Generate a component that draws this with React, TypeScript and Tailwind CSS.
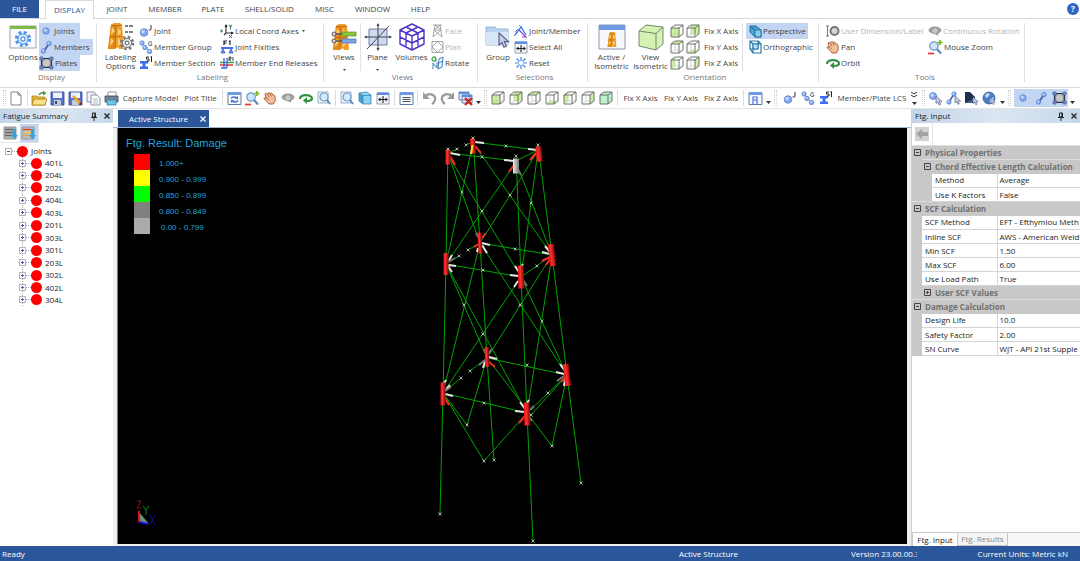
import type { ReactNode } from 'react'
import { clsx } from 'clsx'

/* ---------- icons ---------- */

function Svg({ w = 16, h = 16, vb, children }: { w?: number; h?: number; vb?: string; children: ReactNode }) {
  return (
    <svg width={w} height={h} viewBox={vb ?? `0 0 ${w} ${h}`} fill="none" className="block shrink-0" aria-hidden="true">
      {children}
    </svg>
  )
}

function Ball({ x, y, r }: { x: number; y: number; r: number }) {
  return (
    <>
      <circle cx={x} cy={y} r={r} fill="#86a9ec" stroke="#5b83d6" strokeWidth="0.8" />
      <circle cx={x - r * 0.25} cy={y - r * 0.25} r={r * 0.45} fill="#c6d8fa" />
    </>
  )
}

function Gear({ x, y, r, color }: { x: number; y: number; r: number; color: string }) {
  return (
    <>
      <circle cx={x} cy={y} r={r} stroke={color} strokeWidth={r * 0.5} strokeDasharray={`${r * 0.42} ${r * 0.365}`} />
      <circle cx={x} cy={y} r={r * 0.78} fill="#e4eefb" stroke={color} strokeWidth="1" />
      <circle cx={x} cy={y} r={r * 0.32} fill="#fff" stroke={color} strokeWidth="1.2" />
    </>
  )
}

function Tower() {
  return (
    <>
      <path d="M4 2 7 0h6l2 2 2 24h-5l-1-2-3 2H1z" fill="#ee9f2b" />
      <path d="M4 2 9 3 8 26H1z" fill="#e48a17" />
      <path d="M5 4l3 4-4 4zM11 5l3 4-3 4zM4 15l3 3-4 5zM11 15l4 4-4 4z" fill="#ffd07a" />
      <path d="M4 2 9 3l6-1M9 3 8 25M3 13l6 1 6-1" stroke="#b9670b" strokeWidth="0.9" />
    </>
  )
}

const Cursor = ({ x, y, s = 1 }: { x: number; y: number; s?: number }) => (
  <path
    transform={`translate(${x} ${y}) scale(${s})`}
    d="M0 0v10l2.4-2 1.8 4 2-.9-1.8-3.9H8z"
    fill="#c9cdea"
    stroke="#55597f"
    strokeWidth="0.9"
  />
)

const OptionsIcon = () => (
  <Svg w={28} h={24}>
    <rect x="1" y="1" width="26" height="22" fill="#f8fafd" stroke="#9aa4ae" />
    <path d="M1 1h26v3H1z" fill="#7dbb42" />
    <Gear x={14} y={14} r={6.5} color="#4b93e6" />
  </Svg>
)

const JointIcon = () => (
  <Svg w={14} h={14}>
    <Ball x={7} y={7} r={3.2} />
  </Svg>
)

const MemberIcon = () => (
  <Svg w={14} h={14}>
    <path d="M5 11 10 3.500" stroke="#44639e" strokeWidth="1.8" />
    <Ball x={4.5} y={11} r={2.2} />
    <Ball x={10} y={3.5} r={2.2} />
  </Svg>
)

const PlateIcon = () => (
  <Svg w={15} h={14}>
    <path d="M2.500 2.500h10v9h-10z" fill="#8f949e" stroke="#2b3346" strokeWidth="1.2" />
    <circle cx="7.5" cy="7" r="3.4" fill="#c8c8c8" />
    {[[2.5, 2.5], [12.5, 2.5], [2.5, 11.5], [12.5, 11.5]].map(([x, y]) => (
      <circle key={`${x}-${y}`} cx={x} cy={y} r="1.8" fill="#6f8ecb" stroke="#34497c" strokeWidth="0.6" />
    ))}
  </Svg>
)

const LabelingIcon = () => (
  <Svg w={28} h={28}>
    <Tower />
    <path d="M18 3h3m1 0h4M18 9h3m1 0h4" stroke="#555" strokeWidth="1.6" />
    <Gear x={20} y={20} r={5.8} color="#777" />
  </Svg>
)

const JointJIcon = () => (
  <Svg w={14} h={14}>
    <Ball x={5} y={8.5} r={3.8} />
    <path d="M12 1v4c0 1.600-2 1.600-2.400.5" stroke="#333" strokeWidth="1" />
  </Svg>
)

const GroupGIcon = () => (
  <Svg w={14} h={14}>
    <path d="M3 3l7 8" stroke="#8d9ab0" />
    <Ball x={3} y={3} r={2.2} />
    <Ball x={6} y={7.5} r={2.2} />
    <Ball x={10.5} y={11.5} r={2.2} />
    <path d="M13 2.500c-1-1.500-3.500-1-3.500 1.200s2.500 2.500 3.500 1V4h-1.300" stroke="#556" strokeWidth="0.9" />
  </Svg>
)

const SectionIcon = () => (
  <Svg w={14} h={14}>
    <path d="M1 5h8v2.500H6.500v3H9V13H1v-2.500h2.500v-3H1z" fill="#3e6df0" />
    <path d="M10 1H7.500v2H10v2H7.500M11.500 1l1-.5V6" stroke="#222" strokeWidth="1" />
  </Svg>
)

const CoordIcon = () => (
  <Svg w={14} h={14}>
    <path d="M6 1v8h7M6 9l-2 2" stroke="#333" strokeWidth="1.1" />
    <path d="M6 0 4.500 3h3zM14 9l-3-1.500v3z" fill="#222" />
    <path d="M0 7h3M1.500 5.500v3M9 1l1.500 2L12 1m-1.500 2v2.500" stroke="#3b7f63" strokeWidth="1.1" />
    <path d="M9 11l3 3m0-3-3 3" stroke="#3c58a0" strokeWidth="1" />
  </Svg>
)

const FixityIcon = () => (
  <Svg w={14} h={14}>
    <path d="M4 5V1h3M4 3h2.500M9 1.500 10 1v4" stroke="#1d1d3c" strokeWidth="1.2" />
    <path d="M1 7h12v2H1z" fill="#3e6df0" />
    <path d="M3 9l-2 4h4zM11 9l-2 4h4z" fill="#6a92f5" stroke="#3157c4" strokeWidth="0.8" />
  </Svg>
)

const ReleaseIcon = () => (
  <Svg w={14} h={14}>
    <path d="M0 6.500h14" stroke="#2fa043" strokeWidth="1.4" />
    <path d="M0 9h13" stroke="#e03434" strokeWidth="1.5" />
    <path d="M4 2v9M7 2v10M1 12h6" stroke="#3963d6" strokeWidth="1.3" />
    <path d="M9 5V1h2v2H9l2 2M13 1v4" stroke="#333" strokeWidth="0.9" />
  </Svg>
)

const ViewsIcon = () => (
  <Svg w={26} h={27}>
    <g transform="translate(1 0)">
      <Tower />
    </g>
    <path d="M11 8h14v4H11z" fill="#8dc63f" stroke="#5d8a22" strokeWidth="0.7" />
    <path d="M11 15h14v4H11z" fill="#7ba7e6" stroke="#4470b4" strokeWidth="0.7" />
    <path d="M3 10h8M3 17h8" stroke="#555" strokeWidth="1.4" />
    <circle cx="3" cy="10" r="2" fill="#ddd" stroke="#555" />
    <circle cx="3" cy="17" r="2" fill="#ddd" stroke="#555" />
  </Svg>
)

const PlaneIcon = () => (
  <Svg w={28} h={28}>
    <path d="M5 6h18v16H5z" fill="#ced9f3" stroke="#6a7387" strokeWidth="0.9" />
    <path d="M14 1v26M1 14h26M3 26 25 3" stroke="#3e4452" strokeWidth="1" />
    <path d="M14 0l-1.500 3h3zM28 14l-3-1.500v3zM0 14l3-1.500v3zM14 28l-1.500-3h3z" fill="#3e4452" />
  </Svg>
)

const VolumesIcon = () => (
  <Svg w={28} h={28}>
    <path
      d="M14 1l12 6v14l-12 6-12-6V7zM2 7l12 6 12-6M14 13v14M8 4l12 6v14M20 4 8 10v14M2 14l12 6 12-6"
      stroke="#4f35c9"
      strokeWidth="1.4"
      strokeLinejoin="round"
    />
  </Svg>
)

const FaceIcon = () => (
  <Svg w={13} h={14}>
    <path d="M2 1h9M4 1 2 13M9 1l2 12M3 6h7M4 1l6 5-8 7M9 1 3 6l8 7" stroke="#9a9a9a" strokeWidth="0.9" />
  </Svg>
)

const PlanIcon = () => (
  <Svg w={13} h={14}>
    <path d="M1 1.500h11v11H1zM6.500 1.500 12 7l-5.500 5.500L1 7z" stroke="#9a9a9a" strokeWidth="0.9" />
  </Svg>
)

const RotateIcon = () => (
  <Svg w={13} h={14}>
    <path d="M5 2C3 0 1 1 1 3s2 3 4 1.500V3H3.500" stroke="#2a9a3c" strokeWidth="1.2" />
    <path d="M2 13V7l4 5V6M7 13l1-10 4-2-1 10zM8 7l4-2" stroke="#3a78b5" strokeWidth="1" />
  </Svg>
)

const FolderIcon = () => (
  <Svg w={26} h={26}>
    <path d="M1 3h9l2 2h11v16H1z" fill="#b9d3ef" stroke="#8eaed2" strokeWidth="0.9" />
    <path d="M1 8h22v13H1z" fill="#d6e6f7" />
    <Cursor x={14} y={9} s={1.2} />
  </Svg>
)

const JointMemberIcon = () => (
  <Svg w={14} h={14}>
    <path d="M1 11 7 3l5 8" stroke="#3a86e0" strokeWidth="1.4" />
    <path d="M5 6l7 7H8" stroke="#8d42c9" strokeWidth="1.2" />
    <path d="M5 1l4 4M0 12l4-4M1 8l3-3" stroke="#4a7ee0" strokeWidth="1" />
  </Svg>
)

const SelectAllIcon = () => (
  <Svg w={14} h={14}>
    <path d="M1 2h12v11H1z" fill="#f5f7fb" stroke="#8894a8" strokeWidth="0.9" />
    <path d="M1 1.500h12V4H1z" fill="#5f8ddd" />
    <path d="M7 5v7M3 8.500h8" stroke="#222" strokeWidth="1.1" />
    <path d="M2 8.500l2.500-2v4zM12 8.500l-2.500-2v4z" fill="#222" />
  </Svg>
)

const ResetIcon = () => (
  <Svg w={14} h={14}>
    <path
      d="M7 1v4M7 9v4M1 7h4M9 7h4M2.500 2.500l3 3M8.500 8.500l3 3M11.500 2.500l-3 3M5.500 8.500l-3 3"
      stroke="#3d86e4"
      strokeWidth="1.2"
    />
  </Svg>
)

const ActiveIsoIcon = () => (
  <Svg w={28} h={26}>
    <path d="M1 1h26v24H1z" fill="#f6f8fb" stroke="#8d99ac" />
    <path d="M1 1h26v5H1z" fill="#6f9be4" />
    <g transform="translate(9 8) scale(0.55 0.58)">
      <Tower />
    </g>
  </Svg>
)

const BigCubeIcon = () => (
  <Svg w={26} h={27}>
    <path d="M1 7 8 1l17 2v17l-7 6-17-4z" fill="#d3f2b4" stroke="#74876c" strokeLinejoin="round" />
    <path d="M1 7l17 2.500L25 3M18 9.500V26" stroke="#74876c" />
  </Svg>
)

type Face = 'front' | 'back' | 'top' | 'bottom' | 'left' | 'right' | 'all'

const facePaths: Record<Face, string> = {
  front: 'M1 4h8v9H1z',
  back: 'M5 1h8v9H5z',
  top: 'M1 4l4-3h8L9 4z',
  bottom: 'M1 13l4-3h8l-4 3z',
  left: 'M1 4l4-3v9l-4 3z',
  right: 'M9 4l4-3v9l-4 3z',
  all: 'M1 4l4-3h8v9l-4 3H1z',
}

function CubeIcon({ face }: { face: Face }) {
  return (
    <Svg w={14} h={14}>
      <path d={facePaths[face]} fill={face === 'all' ? '#bff3cd' : '#ccf29c'} />
      <path d="M1 4h8v9H1zM1 4l4-3h8L9 4M13 1v9l-4 3" stroke="#5d625d" strokeWidth="0.9" strokeLinejoin="round" />
      {face !== 'all' && <path d="M5 1v9h8M5 10l-4 3" stroke="#b3b8b3" strokeWidth="0.6" />}
    </Svg>
  )
}

const PerspectiveIcon = () => (
  <Svg w={13} h={14}>
    <path d="M1 2h6l5 4v7H6L1 8z" fill="#4aa3d2" stroke="#1c6c9c" strokeWidth="0.9" />
    <path d="M6 6h6v7H6z" fill="#8ccbe9" stroke="#1c6c9c" strokeWidth="0.9" />
    <path d="M1 2l5 4" stroke="#1c6c9c" />
  </Svg>
)

const OrthographicIcon = () => (
  <Svg w={13} h={14}>
    <path d="M1 1h8v8H1zM4 4h8v9H4zM1 1l3 3M9 1l3 3M1 9l3 4" stroke="#2678a8" strokeWidth="1.2" />
    <path d="M4 4h5v5H4z" fill="#bfe2f2" stroke="#2678a8" />
  </Svg>
)

const DimensionIcon = () => (
  <Svg w={14} h={14}>
    <path d="M0 2h3M0 12h3M1.500 2v10" stroke="#777" />
    <circle cx="8.5" cy="7" r="4" fill="#d5d5d5" stroke="#777" strokeWidth="2" />
  </Svg>
)

const HandIcon = () => (
  <Svg w={14} h={14}>
    <path
      d="M2 3c1-1.500 2-.5 2.600.5C5 1 6.600 1 7.200 2.800 8 1.500 9.500 2 9.700 4c1.500-.5 2.300.8 2.500 2.300.5 3-.2 5-2 6.700H6C5 11 2.500 9.500 1.200 8 .6 6.800 2 6.400 3.200 7.300z"
      fill="#f0bf9c"
      stroke="#a0522d"
      strokeWidth="0.9"
    />
    <path d="M4.600 3.500 6 6M7.200 2.800 8.200 5.500M3.500 7.500l2 1" stroke="#a0522d" strokeWidth="0.8" />
  </Svg>
)

const OrbitIcon = () => (
  <Svg w={14} h={14}>
    <path d="M1 8c0-5 12-5 12-.5 0 2-2 2.500-5 2.500" stroke="#2f9440" strokeWidth="2.2" />
    <path d="M8 6v7l-4-3.500z" fill="#2f9440" />
  </Svg>
)

const ContinuousIcon = () => (
  <Svg w={14} h={14}>
    <path d="M1 6c1-4 11-4 12 0 0 2-2 3-4 3l1 2-4-2C3 9 1 8 1 6z" fill="#a5a5a5" stroke="#818181" strokeWidth="0.8" />
    <path d="M4 5l3-1.500L10 5v3.500L7 10 4 8.500z" fill="#c9c9c9" stroke="#8a8a8a" strokeWidth="0.7" />
  </Svg>
)

const ZoomIcon = () => (
  <Svg w={15} h={15}>
    <circle cx="6" cy="6" r="4.2" fill="#cfe5f7" stroke="#6c9cc7" strokeWidth="1.3" />
    <path d="M9 9l4 4.500" stroke="#5a87b3" strokeWidth="2" />
    <path d="M12 0v5M9.500 2.500h5" stroke="#7cb518" strokeWidth="1.7" />
    <path d="M0 13.500h6" stroke="#dd3a35" strokeWidth="1.7" />
  </Svg>
)

const MagnifierIcon = () => (
  <Svg w={14} h={14}>
    <path d="M1 1h10v11H1z" fill="#eef3fa" stroke="#8ea8cc" strokeWidth="0.9" />
    <circle cx="7" cy="6" r="4" fill="#d5e9f8" stroke="#6c9cc7" strokeWidth="1.2" />
    <path d="M10 9l3 4" stroke="#5a87b3" strokeWidth="1.8" />
  </Svg>
)

const NewIcon = () => (
  <Svg w={14} h={15}>
    <path d="M2 1h7l3 3v10H2z" fill="#fff" stroke="#777" strokeWidth="0.9" />
    <path d="M9 1v3h3" stroke="#777" strokeWidth="0.9" />
  </Svg>
)

const OpenIcon = () => (
  <Svg w={16} h={15}>
    <path d="M1 5h5l1 1h7v8H1z" fill="#e8b93d" stroke="#ab7d16" strokeWidth="0.8" />
    <path d="M3 8h13l-2 6H1z" fill="#fbe08c" stroke="#ab7d16" strokeWidth="0.8" />
    <path d="M8 4c1-2 3-2.500 5-2" stroke="#3d9a2b" strokeWidth="1.6" />
    <path d="M12 0l3.500 2L12 4.500z" fill="#3d9a2b" />
  </Svg>
)

const SaveIcon = () => (
  <Svg w={15} h={15}>
    <path d="M1 1h13v13H1z" fill="#5470cc" stroke="#3a4f9e" strokeWidth="0.9" />
    <path d="M3 1.500h9V7H3z" fill="#eef2fb" />
    <path d="M4 9h7v5H4z" fill="#c6cbd8" />
    <path d="M5 10h2v3H5z" fill="#39457f" />
  </Svg>
)

const SaveAsIcon = () => (
  <Svg w={15} h={15}>
    <path d="M1 1h13v13H1z" fill="#5470cc" stroke="#3a4f9e" strokeWidth="0.9" />
    <path d="M3 1.500h9V7H3z" fill="#eef2fb" />
    <path d="M4 9h7v5H4z" fill="#c6cbd8" />
    <path d="M5 5l7 7" stroke="#e9a823" strokeWidth="2.6" />
    <path d="M10.500 13.500 14 14l-.5-3.500z" fill="#7c2d1c" />
  </Svg>
)

const CopyIcon = () => (
  <Svg w={15} h={15}>
    <path d="M1 1h7l2 2v8H1z" fill="#f2f4f9" stroke="#7d879c" strokeWidth="0.9" />
    <path d="M5 4h6l3 3v7H5z" fill="#fff" stroke="#7d879c" strokeWidth="0.9" />
    <path d="M7 8h5M7 10h5M7 12h5" stroke="#9aa6bf" strokeWidth="0.8" />
  </Svg>
)

const PrintIcon = () => (
  <Svg w={15} h={15}>
    <path d="M4 1h8v5H4z" fill="#fff" stroke="#7b8ba0" strokeWidth="0.9" />
    <path d="M1 5h13v6H1z" fill="#6f8299" stroke="#46566a" strokeWidth="0.9" />
    <path d="M3 9h9v5H3z" fill="#6fc6ea" stroke="#3b7fa6" strokeWidth="0.8" />
  </Svg>
)

function WindowIcon({ children }: { children?: ReactNode }) {
  return (
    <Svg w={15} h={15}>
      <path d="M1 1.500h13v12H1z" fill="#f5f8fc" stroke="#5e7aa8" />
      <path d="M1 1h13v3H1z" fill="#6f9be4" />
      {children}
    </Svg>
  )
}

const BlueCubeIcon = () => (
  <Svg w={14} h={14}>
    <path d="M1 2l8-1 4 3v9H5l-4-3z" fill="#8ad3f2" />
    <path d="M1 2l4 3v8l-4-3z" fill="#3f9fd0" />
    <path d="M1 2l8-1 4 3v9H5l-4-3zM1 2l4 2.500h8M5 4.500V13" stroke="#3787b5" strokeWidth="0.8" />
  </Svg>
)

const UndoIcon = () => (
  <Svg w={15} h={15}>
    <path d="M3 5c5-4 11-1 10 4-.4 2-1.500 3-3 4" stroke="#9b9b9b" strokeWidth="2.2" />
    <path d="M1 1v7h7z" fill="#9b9b9b" />
  </Svg>
)

const RedoIcon = () => (
  <Svg w={15} h={15}>
    <path d="M12 5C7 1 1 4 2 9c.4 2 1.500 3 3 4" stroke="#9b9b9b" strokeWidth="2.2" />
    <path d="M14 1v7H7z" fill="#9b9b9b" />
  </Svg>
)

const DeleteWindowsIcon = () => (
  <Svg w={15} h={15}>
    <path d="M1 1h10v8H1zM4 4h10v8H4z" fill="#e8eefa" stroke="#6175a8" strokeWidth="0.9" />
    <path d="M1 1h10v2H1zM4 4h10v2H4z" fill="#5a8fe0" />
    <path d="M7 7l7 7m0-7-7 7" stroke="#c8261f" strokeWidth="2.4" />
  </Svg>
)

const PickJointIcon = () => (
  <Svg w={15} h={15}>
    <Ball x={5} y={5} r={3.5} />
    <Cursor x={8} y={5} s={0.75} />
  </Svg>
)

const PickMemberIcon = () => (
  <Svg w={15} h={15}>
    <path d="M3 11 8 3" stroke="#44639e" strokeWidth="1.5" />
    <Ball x={3} y={11} r={2.2} />
    <Ball x={8} y={3} r={2.2} />
    <Cursor x={9} y={5} s={0.7} />
  </Svg>
)

const PickPlateIcon = () => (
  <Svg w={15} h={15}>
    <path d="M1 1h5l5 5v6H1z" fill="#1f2f4d" />
    <path d="M1 12 11 7v5z" fill="#3b6694" />
    <Cursor x={9} y={6} s={0.65} />
  </Svg>
)

const GlobeIcon = () => (
  <Svg w={15} h={15}>
    <circle cx="7" cy="7" r="6" fill="#4d7ec6" stroke="#33589a" strokeWidth="0.8" />
    <path d="M3 4c2-2 4-2 5-1L6 6 4 7zM8 8l4-2-1 4-3 2z" fill="#c6dbf3" />
    <Cursor x={9} y={7} s={0.55} />
  </Svg>
)

const SortIcon = ({ tinted }: { tinted?: boolean }) => (
  <Svg w={16} h={16}>
    <path d="M1 2h12v12H1z" fill={tinted ? '#bdbdbd' : '#b0b0b0'} stroke="#969696" />
    <path d="M2 4.500h8" stroke={tinted ? '#e03a2f' : '#666'} strokeWidth="1.3" />
    <path d="M2 7.500h8" stroke={tinted ? '#ecd23c' : '#666'} strokeWidth="1.3" />
    <path d="M2 10.500h8" stroke={tinted ? '#e9a24c' : '#666'} strokeWidth="1.3" />
    <path d="M10 4h3v6h2l-3.500 4L8 10h2z" fill="#2aa5dd" />
  </Svg>
)

const PinIcon = () => (
  <Svg w={8} h={9}>
    <path d="M2.500 1h3v4h-3zM1 5.500h6M4 5.500V9" stroke="#222" strokeWidth="1" />
    <path d="M5 1v4" stroke="#222" strokeWidth="1.2" />
  </Svg>
)

const CloseIcon = ({ color = '#222' }: { color?: string }) => (
  <Svg w={8} h={8}>
    <path d="M1.500 1.500l5 5m0-5-5 5" stroke={color} strokeWidth="1.3" />
  </Svg>
)

const Caret = () => (
  <Svg w={5} h={3}>
    <path d="M0 0h5L2.500 3z" fill="#333" />
  </Svg>
)

const TinyCaret = () => (
  <Svg w={3} h={2}>
    <path d="M0 0h3L1.500 2z" fill="#444" />
  </Svg>
)

/* ---------- ribbon ---------- */

const tabs = [
  { label: 'JOINT', width: 'w-[44px]' },
  { label: 'MEMBER', width: 'w-[52px]' },
  { label: 'PLATE', width: 'w-[44px]' },
  { label: 'SHELL/SOLID', width: 'w-[69px]' },
  { label: 'MISC', width: 'w-[41px]' },
  { label: 'WINDOW', width: 'w-[55px]' },
  { label: 'HELP', width: 'w-[41px]' },
]

function SmallButton({
  icon,
  label,
  active,
  disabled,
  caret,
  className,
}: {
  icon: ReactNode
  label: string
  active?: boolean
  disabled?: boolean
  caret?: boolean
  className?: string
}) {
  return (
    <button
      type="button"
      disabled={disabled}
      className={clsx(
        'flex h-4 items-center gap-px whitespace-nowrap',
        active && 'bg-[#c2d5f2]',
        disabled ? 'text-[#b4b4b4]' : 'text-[#444]',
        className,
      )}
    >
      {icon}
      {label}
      {caret && (
        <span className="pl-[2px]">
          <TinyCaret />
        </span>
      )}
    </button>
  )
}

function LargeButton({
  icon,
  lines,
  caret,
  className,
}: {
  icon: ReactNode
  lines: string[]
  caret?: boolean
  className: string
}) {
  return (
    <button type="button" className={clsx('flex shrink-0 flex-col items-center leading-[9px] text-[#444]', className)}>
      <span className="mb-px flex h-7 items-center">{icon}</span>
      {lines.map((line) => (
        <span key={line} className="whitespace-nowrap">
          {line}
        </span>
      ))}
      {caret && (
        <span className="mt-2">
          <TinyCaret />
        </span>
      )}
    </button>
  )
}

function Group({ title, className, children }: { title: string; className: string; children: ReactNode }) {
  return (
    <section className={clsx('flex shrink-0 flex-col border-r border-[#e1e1e1]', className)}>
      <div className="flex h-12">{children}</div>
      <h2 className="text-center leading-[11px] text-[#777]">{title}</h2>
    </section>
  )
}

const axisRows: { label: string; faces: [Face, Face] }[] = [
  { label: 'Fix X Axis', faces: ['front', 'back'] },
  { label: 'Fix Y Axis', faces: ['top', 'bottom'] },
  { label: 'Fix Z Axis', faces: ['left', 'right'] },
]

function Ribbon() {
  return (
    <div className="flex h-[69px] items-start border-b border-[#dcdcdc] bg-white pt-1">
      <Group title="Display" className="w-[97px] pl-[7px]">
        <LargeButton icon={<OptionsIcon />} lines={['Options']} className="w-8" />
        <div className="flex flex-col items-start">
          <SmallButton icon={<JointIcon />} label="Joints" active className="w-[41px]" />
          <SmallButton icon={<MemberIcon />} label="Members" active className="w-[54px]" />
          <SmallButton icon={<PlateIcon />} label="Plates" active className="w-[41px]" />
        </div>
      </Group>
      <Group title="Labeling" className="w-[227px] pl-[5px]">
        <LargeButton icon={<LabelingIcon />} lines={['Labeling', 'Options']} className="w-[37px]" />
        <div className="w-[81px]">
          <SmallButton icon={<JointJIcon />} label="Joint" />
          <SmallButton icon={<GroupGIcon />} label="Member Group" />
          <SmallButton icon={<SectionIcon />} label="Member Section" />
        </div>
        <div>
          <SmallButton icon={<CoordIcon />} label="Local Coord Axes" caret />
          <SmallButton icon={<FixityIcon />} label="Joint Fixities" />
          <SmallButton icon={<ReleaseIcon />} label="Member End Releases" />
        </div>
      </Group>
      <Group title="Views" className="w-[154px] pl-1">
        <LargeButton icon={<ViewsIcon />} lines={['Views']} caret className="w-[33px] border-r border-[#e1e1e1]" />
        <LargeButton icon={<PlaneIcon />} lines={['Plane']} caret className="w-[33px]" />
        <LargeButton icon={<VolumesIcon />} lines={['Volumes']} className="w-[35px]" />
        <div className="pl-[2px]">
          <SmallButton icon={<FaceIcon />} label="Face" disabled />
          <SmallButton icon={<PlanIcon />} label="Plan" disabled />
          <SmallButton icon={<RotateIcon />} label="Rotate" />
        </div>
      </Group>
      <Group title="Selections" className="w-[110px] pl-1">
        <LargeButton icon={<FolderIcon />} lines={['Group']} className="w-8" />
        <div>
          <SmallButton icon={<JointMemberIcon />} label="Joint/Member" />
          <SmallButton icon={<SelectAllIcon />} label="Select All" />
          <SmallButton icon={<ResetIcon />} label="Reset" />
        </div>
      </Group>
      <Group title="Orientation" className="w-[231px] pl-1">
        <LargeButton icon={<ActiveIsoIcon />} lines={['Active /', 'Isometric']} className="w-[39px]" />
        <LargeButton icon={<BigCubeIcon />} lines={['View', 'Isometric']} className="w-[39px]" />
        <div className="w-[73px] border-r border-[#e1e1e1]">
          {axisRows.map(({ label, faces }) => (
            <div key={label} className="flex h-4 items-center gap-[2px] whitespace-nowrap text-[#444]">
              <button type="button" aria-label={`${label} ${faces[0]}`}>
                <CubeIcon face={faces[0]} />
              </button>
              <button type="button" aria-label={`${label} ${faces[1]}`}>
                <CubeIcon face={faces[1]} />
              </button>
              <span className="pl-[2px]">{label}</span>
            </div>
          ))}
        </div>
        <div className="pl-[3px]">
          <SmallButton icon={<PerspectiveIcon />} label="Perspective" active className="w-[62px] pl-[3px]" />
          <SmallButton icon={<OrthographicIcon />} label="Orthographic" className="pl-[3px]" />
        </div>
      </Group>
      <Group title="Tools" className="w-[206px] pl-[7px]">
        <div className="w-[102px]">
          <SmallButton icon={<DimensionIcon />} label="User Dimension/Label" disabled />
          <SmallButton icon={<HandIcon />} label="Pan" />
          <SmallButton icon={<OrbitIcon />} label="Orbit" />
        </div>
        <div>
          <SmallButton icon={<ContinuousIcon />} label="Continuous Rotation" disabled />
          <SmallButton icon={<ZoomIcon />} label="Mouse Zoom" />
        </div>
      </Group>
    </div>
  )
}

/* ---------- toolbar ---------- */

function Tool({ label, children, active }: { label: string; children: ReactNode; active?: boolean }) {
  return (
    <button
      type="button"
      aria-label={label}
      className={clsx('flex h-[18px] w-[18px] shrink-0 items-center justify-center', active && 'bg-[#c2d5f2]')}
    >
      {children}
    </button>
  )
}

function TextTool({ label, className }: { label: string; className: string }) {
  return (
    <button type="button" className={clsx('shrink-0 whitespace-nowrap text-center text-[#444]', className)}>
      {label}
    </button>
  )
}

const Divider = () => <div className="mx-[2px] h-4 w-px shrink-0 bg-[#dcdcdc]" />

const Grip = () => <div className="mx-px h-4 w-[3px] shrink-0 border-x border-dotted border-[#cfcfcf]" />

const MoreButton = () => (
  <button type="button" aria-label="More" className="flex h-3 w-[9px] shrink-0 items-end justify-center self-center">
    <Caret />
  </button>
)

const cubeFaces: Face[] = ['front', 'back', 'top', 'bottom', 'left', 'right', 'all']

function Toolbar() {
  return (
    <div className="flex h-[21px] items-center overflow-hidden border-b border-[#e4e4e4] bg-white pl-[2px]">
      <Grip />
      <Tool label="New"><NewIcon /></Tool>
      <Divider />
      <Tool label="Open"><OpenIcon /></Tool>
      <Tool label="Save"><SaveIcon /></Tool>
      <Tool label="Save as"><SaveAsIcon /></Tool>
      <Tool label="Copy"><CopyIcon /></Tool>
      <Tool label="Print"><PrintIcon /></Tool>
      <TextTool label="Capture Model" className="w-[61px]" />
      <TextTool label="Plot Title" className="w-[39px]" />
      <Divider />
      <Tool label="Refresh">
        <WindowIcon>
          <path d="M4 7.500c1-2 5-2 6 0M11 9.500c-1 2-5 2-6 0" stroke="#3a6fcc" strokeWidth="1.3" />
          <path d="M11 5v3H8zM4 12V9h3z" fill="#3a6fcc" />
        </WindowIcon>
      </Tool>
      <Tool label="Zoom"><ZoomIcon /></Tool>
      <Tool label="Pan view"><HandIcon /></Tool>
      <Tool label="Rotate view"><ContinuousIcon /></Tool>
      <Tool label="Orbit view"><OrbitIcon /></Tool>
      <Tool label="Zoom area"><MagnifierIcon /></Tool>
      <Divider />
      <Tool label="Zoom extents"><MagnifierIcon /></Tool>
      <Tool label="Render"><BlueCubeIcon /></Tool>
      <Tool label="Fit"><SelectAllIcon /></Tool>
      <Divider />
      <Tool label="Report">
        <WindowIcon>
          <path d="M3.500 6.500h8M3.500 8.500h8M3.500 10.500h8" stroke="#555" />
        </WindowIcon>
      </Tool>
      <Divider />
      <Tool label="Undo"><UndoIcon /></Tool>
      <Tool label="Redo"><RedoIcon /></Tool>
      <Tool label="Close windows"><DeleteWindowsIcon /></Tool>
      <MoreButton />
      <Grip />
      <div className="flex shrink-0 pl-px">
        {cubeFaces.map((face) => (
          <Tool key={face} label={`View ${face}`}>
            <CubeIcon face={face} />
          </Tool>
        ))}
      </div>
      <Divider />
      <TextTool label="Fix X Axis" className="w-[41px]" />
      <TextTool label="Fix Y Axis" className="w-[40px]" />
      <TextTool label="Fix Z Axis" className="w-[40px]" />
      <Divider />
      <Tool label="Restore">
        <WindowIcon>
          <path d="M5 13V6h4v3H5M9 9v4" stroke="#4a74dc" strokeWidth="1.2" />
        </WindowIcon>
      </Tool>
      <MoreButton />
      <Grip />
      <div className="flex shrink-0 pl-[3px]">
        <Tool label="Joint labels"><JointJIcon /></Tool>
        <Tool label="Group labels"><GroupGIcon /></Tool>
        <Tool label="Section labels"><SectionIcon /></Tool>
      </div>
      <TextTool label="Member/Plate LCS" className="w-[74px]" />
      <button type="button" aria-label="Toolbar options" className="flex w-[10px] shrink-0 flex-col items-center gap-1">
        <Svg w={6} h={6}>
          <path d="M0 0l3 2 3-2M0 3l3 2 3-2" stroke="#333" />
        </Svg>
        <Caret />
      </button>
      <div className="flex shrink-0 items-center pl-[2px]">
        <Grip />
      </div>
      <Tool label="Pick joint"><PickJointIcon /></Tool>
      <Tool label="Pick member"><PickMemberIcon /></Tool>
      <Tool label="Pick plate"><PickPlateIcon /></Tool>
      <Tool label="Pick any"><GlobeIcon /></Tool>
      <MoreButton />
      <div className="flex shrink-0 items-center pr-[2px]">
        <Grip />
      </div>
      <Tool label="Show joints" active><JointIcon /></Tool>
      <Tool label="Show members" active><MemberIcon /></Tool>
      <Tool label="Show plates" active><PlateIcon /></Tool>
      <MoreButton />
    </div>
  )
}

/* ---------- side panels ---------- */

function PanelHeader({ title }: { title: string }) {
  return (
    <header className="flex h-[14px] items-center bg-gradient-to-r from-[#c3d4e6] via-[#dbe6f2] to-[#c6d8ea] pr-[2px] pl-[3px] text-[#222]">
      <h2 className="flex-1 whitespace-nowrap">{title}</h2>
      <button type="button" aria-label={`Pin ${title}`}>
        <PinIcon />
      </button>
      <button type="button" aria-label={`Close ${title}`} className="ml-[5px]">
        <CloseIcon />
      </button>
    </header>
  )
}

const joints = ['401L', '204L', '202L', '404L', '403L', '201L', '303L', '301L', '203L', '302L', '402L', '304L']

function Expander({ open }: { open?: boolean }) {
  return (
    <Svg w={7} h={7}>
      <path d="M.5.5h6v6h-6z" fill="#fff" stroke="#b0b0b0" />
      <path d={open ? 'M2 3.500h3' : 'M2 3.500h3M3.500 2v3'} stroke="#4a5aa0" />
    </Svg>
  )
}

const Dot = () => <span className="size-[11px] shrink-0 rounded-full bg-[#ff0000]" />

function FatigueSummary() {
  return (
    <aside className="flex w-[113px] shrink-0 flex-col bg-white">
      <PanelHeader title="Fatigue Summary" />
      <div className="flex h-5 w-[39px] items-center border-r border-b border-[#e4e4e4] pl-[2px]">
        <button type="button" aria-label="Sort by joint" className="p-px">
          <SortIcon />
        </button>
        <button type="button" aria-label="Sort by damage" className="bg-[#c2d5f2] p-px">
          <SortIcon tinted />
        </button>
      </div>
      <div className="pt-[2px] pl-[5px] leading-3 text-[#222]">
        <div className="flex h-3 items-center">
          <Expander open />
          <span className="w-[5px] border-t border-dotted border-[#aaa]" />
          <Dot />
          <span className="pl-[3px]">Joints</span>
        </div>
        <ul className="ml-[17px] flex h-[149px] flex-col justify-between border-l border-dotted border-[#aaa]">
          {joints.map((id) => (
            <li key={id} className="-ml-1 flex h-3 items-center">
              <Expander />
              <span className="w-[5px] border-t border-dotted border-[#aaa]" />
              <Dot />
              <span className="pl-[3px]">{id}</span>
            </li>
          ))}
        </ul>
      </div>
    </aside>
  )
}

type Row = { kind: 'section' | 'subsection' | 'item' | 'subitem'; name: string; value?: string; closed?: boolean }

const rows: Row[] = [
  { kind: 'section', name: 'Physical Properties' },
  { kind: 'subsection', name: 'Chord Effective Length Calculation' },
  { kind: 'subitem', name: 'Method', value: 'Average' },
  { kind: 'subitem', name: 'Use K Factors', value: 'False' },
  { kind: 'section', name: 'SCF Calculation' },
  { kind: 'item', name: 'SCF Method', value: 'EFT - Efthymiou Meth' },
  { kind: 'item', name: 'Inline SCF', value: 'AWS - American Weld' },
  { kind: 'item', name: 'Min SCF', value: '1.50' },
  { kind: 'item', name: 'Max SCF', value: '6.00' },
  { kind: 'item', name: 'Use Load Path', value: 'True' },
  { kind: 'subsection', name: 'User SCF Values', closed: true },
  { kind: 'section', name: 'Damage Calculation' },
  { kind: 'item', name: 'Design Life', value: '10.0' },
  { kind: 'item', name: 'Safety Factor', value: '2.00' },
  { kind: 'item', name: 'SN Curve', value: 'WJT - API 21st Supple' },
]

function GridToggle({ name, closed }: { name: string; closed?: boolean }) {
  return (
    <button type="button" aria-label={`Toggle ${name}`} className="flex w-full justify-center">
      <Svg w={7} h={7}>
        <path d={closed ? 'M.5.5h6v6h-6zM2 3.500h3M3.500 2v3' : 'M.5.5h6v6h-6zM2 3.500h3'} stroke="#444" />
      </Svg>
    </button>
  )
}

function PropertyRow({ row }: { row: Row }) {
  const { kind, name, value, closed } = row
  if (kind === 'section') {
    return (
      <tr className="h-[14px] bg-[#c8c8c8]">
        <td className="border-t border-[#dedede]"><GridToggle name={name} closed={closed} /></td>
        <th colSpan={3} scope="rowgroup" className="border-t border-[#dedede] pl-[3px] text-left font-bold text-[#707070]">
          {name}
        </th>
      </tr>
    )
  }
  if (kind === 'subsection') {
    return (
      <tr className="h-[14px] bg-[#c8c8c8]">
        <td />
        <td className="border-t border-[#dedede]"><GridToggle name={name} closed={closed} /></td>
        <th colSpan={2} scope="rowgroup" className="border-t border-[#dedede] pl-[3px] text-left font-bold text-[#707070]">
          {name}
        </th>
      </tr>
    )
  }
  const nested = kind === 'subitem'
  return (
    <tr className="h-[14px]">
      <td colSpan={nested ? 2 : 1} className="bg-[#c8c8c8]" />
      <th
        colSpan={nested ? 1 : 2}
        scope="row"
        className="border-r border-b border-[#d4d4d4] pl-[3px] text-left font-normal text-[#222]"
      >
        {name}
      </th>
      <td className="overflow-hidden border-b border-[#d4d4d4] pl-[2px] text-[#222]">{value}</td>
    </tr>
  )
}

function FatigueInput() {
  return (
    <aside className="flex w-[169px] shrink-0 flex-col border-l border-[#d0d0d0] bg-white">
      <PanelHeader title="Ftg. Input" />
      <div className="flex h-[22px] w-[21px] items-center justify-center border-r border-[#e4e4e4]">
        <button type="button" aria-label="Back" disabled>
          <Svg w={14} h={14}>
            <path d="M0 0h14v14H0z" fill="#d2d2d2" />
            <path d="M1 7l6-5v3h6v4H7v3z" fill="#a2a2a2" />
          </Svg>
        </button>
      </div>
      <table className="w-full table-fixed border-collapse leading-3 whitespace-nowrap">
        <colgroup>
          <col className="w-[10px]" />
          <col className="w-[10px]" />
          <col className="w-[65px]" />
          <col />
        </colgroup>
        <tbody>
          {rows.map((row) => (
            <PropertyRow key={row.name} row={row} />
          ))}
        </tbody>
      </table>
      <div className="flex-1" />
      <div className="flex h-[14px] items-stretch border-t border-[#c8c8c8] bg-[#f8f8f8] leading-3">
        <button type="button" className="w-[46px] border-x border-[#c8c8c8] bg-white text-[#222]">Ftg. Input</button>
        <button type="button" className="w-[50px] border-r border-b border-[#c8c8c8] bg-[#f4f4f4] text-[#888]">Ftg. Results</button>
      </div>
    </aside>
  )
}

/* ---------- model view ---------- */

type Point = [number, number]

// legs run top to bottom: cap, level 2, level 3, pile
const legs: Point[][] = [
  [[448, 149], [446, 264], [443, 393], [440, 514]],
  [[473, 138], [480, 243], [487, 358], [494, 460]],
  [[538, 145], [552, 255], [567, 375], [581, 483]],
  [[516, 156], [521, 277], [527, 413], [533, 541]],
]

const braces: [number, number, number, number][] = [
  // top frame
  [448, 153, 516, 161], [473, 142, 538, 150], [448, 153, 457, 149], [466, 145, 473, 142], [516, 161, 538, 150],
  // top bay
  [448, 155, 521, 277], [516, 162, 446, 264], [473, 143, 552, 255], [538, 151, 480, 243],
  [448, 154, 480, 243], [473, 143, 446, 264], [538, 151, 521, 277], [516, 162, 552, 255],
  // level 2 frame
  [446, 264, 521, 277], [480, 243, 552, 255], [446, 264, 459, 256], [468, 250, 480, 243], [521, 277, 552, 255],
  // middle bay
  [446, 264, 527, 413], [521, 277, 443, 393], [480, 243, 567, 375], [552, 255, 487, 358],
  [446, 264, 487, 358], [480, 243, 443, 393], [552, 255, 527, 413], [521, 277, 567, 375],
  // level 3 frame
  [443, 393, 527, 413], [487, 358, 567, 375], [443, 393, 461, 378], [470, 371, 487, 358], [527, 413, 567, 375],
  // lower bay
  [443, 393, 484, 461], [484, 461, 527, 413], [443, 393, 467, 425], [467, 425, 487, 358],
  [527, 413, 552, 446], [552, 446, 567, 375], [487, 358, 531, 415], [531, 415, 567, 375],
]

const nodes: Point[] = [
  [448, 149], [473, 138], [538, 145], [516, 156], [457, 149], [466, 145], [506, 146], [482, 157],
  [462, 192], [510, 195], [531, 203], [482, 211], [459, 256], [468, 250], [515, 249], [483, 270], [537, 266],
  [464, 305], [520, 305], [542, 321], [483, 334], [461, 378], [470, 371], [527, 365], [484, 403], [548, 393],
  [467, 425], [484, 461], [494, 460], [552, 446], [531, 415], [440, 514], [581, 483], [533, 541],
]

const stubs: { color: string; lines: [number, number, number, number][] }[] = [
  {
    color: '#e4e4e4',
    lines: [
      [450, 153, 460, 155], [475, 142, 484, 143], [528, 149, 537, 150], [504, 160, 514, 161],
      [448, 262, 452, 255], [448, 265, 456, 266], [448, 266, 452, 272], [482, 243, 490, 245],
      [482, 245, 487, 253], [550, 254, 542, 252], [550, 252, 545, 246], [519, 276, 510, 275],
      [519, 272, 515, 266], [518, 281, 514, 287], [521, 267, 523, 264], [478, 248, 477, 252],
      [445, 394, 453, 396], [443, 385, 446, 380], [445, 391, 450, 385], [489, 357, 497, 359],
      [485, 361, 483, 368], [525, 412, 515, 411], [525, 409, 520, 402], [527, 403, 529, 400],
      [564, 374, 556, 372], [565, 371, 560, 364], [565, 378, 564, 386],
    ],
  },
  {
    color: '#777',
    lines: [
      [518, 170, 521, 175], [446, 263, 455, 258], [523, 280, 527, 286], [478, 237, 476, 233], [445, 391, 451, 387],
      [488, 354, 492, 349], [486, 353, 484, 349], [485, 360, 479, 365], [530, 410, 534, 406], [529, 417, 532, 421],
      [564, 376, 557, 381],
    ],
  },
  {
    color: '#f03028',
    lines: [
      [450, 156, 455, 165], [475, 146, 481, 153], [536, 153, 530, 160], [514, 165, 509, 172],
      [482, 238, 486, 233], [479, 244, 474, 247], [550, 257, 542, 261], [551, 258, 546, 265],
      [444, 397, 449, 405], [489, 362, 495, 367], [525, 416, 519, 423], [565, 377, 561, 382],
    ],
  },
]

const cans: { x: number; y: number; w: number; h: number; gray?: boolean; tilt?: number }[] = [
  { x: 448, y: 157, w: 5, h: 15 },
  { x: 473, y: 146, w: 5, h: 15, tilt: -4 },
  { x: 539, y: 154, w: 6, h: 15, tilt: -6 },
  { x: 516, y: 166, w: 6, h: 15, gray: true },
  { x: 446, y: 264, w: 5, h: 22 },
  { x: 480, y: 243, w: 4, h: 21, tilt: -3 },
  { x: 552, y: 255, w: 6, h: 22, tilt: -6 },
  { x: 521, y: 277, w: 6, h: 23, tilt: -2 },
  { x: 443, y: 394, w: 5, h: 23 },
  { x: 487, y: 357, w: 4, h: 20, tilt: -3 },
  { x: 567, y: 375, w: 6, h: 22, tilt: -6 },
  { x: 527, y: 414, w: 6, h: 23, tilt: -2 },
]

function JacketModel() {
  return (
    <svg viewBox="118 128 789 416" className="block h-full w-full" role="img" aria-label="Jacket structure coloured by fatigue damage">
      <defs>
        <linearGradient id="can-red">
          <stop offset="0" stopColor="#e01010" />
          <stop offset="0.4" stopColor="#ff3030" />
          <stop offset="1" stopColor="#780808" />
        </linearGradient>
        <linearGradient id="can-gray">
          <stop offset="0" stopColor="#eee" />
          <stop offset="1" stopColor="#777" />
        </linearGradient>
      </defs>
      <g stroke="#00a400" strokeWidth="1">
        {legs.map((leg) => (
          <polyline key={leg[0][0]} points={leg.map((p) => p.join(',')).join(' ')} fill="none" />
        ))}
        {braces.map(([x1, y1, x2, y2], i) => (
          <line key={i} x1={x1} y1={y1} x2={x2} y2={y2} />
        ))}
      </g>
      {stubs.map(({ color, lines }) => (
        <g key={color} stroke={color} strokeWidth="2">
          {lines.map(([x1, y1, x2, y2], i) => (
            <line key={i} x1={x1} y1={y1} x2={x2} y2={y2} />
          ))}
        </g>
      ))}
      {cans.map(({ x, y, w, h, gray, tilt = 0 }) => (
        <rect
          key={`${x}-${y}`}
          x={x - w / 2}
          y={y - h / 2}
          width={w}
          height={h}
          transform={`rotate(${tilt} ${x} ${y})`}
          fill={gray ? 'url(#can-gray)' : 'url(#can-red)'}
        />
      ))}
      <path d="M472.500 145l-1.500 9" stroke="#e8e020" strokeWidth="2" />
      <g stroke="#c8d8c8" strokeWidth="0.8">
        {nodes.map(([x, y]) => (
          <path key={`${x}-${y}`} d={`M${x - 1.5} ${y - 1.5}l3 3m0-3-3 3`} />
        ))}
      </g>
      {/* axis triad */}
      <path d="M139 512l10 12-10-2z" fill="#6f8f78" />
      <path d="M139 522v-11" stroke="#e01010" strokeWidth="2" />
      <path d="M139 522l9 2" stroke="#1414e8" strokeWidth="2" />
      <path d="M137 501h4l-4 7h4" stroke="#8c1212" fill="none" />
      <path d="M143 506l3 4 3-4m-3 4v5" stroke="#128a12" fill="none" />
      <path d="M150 515l5 10m0-10-5 10" stroke="#101090" fill="none" />
    </svg>
  )
}

const legend = [
  { swatch: 'bg-[#ff0000]', label: '1.000+' },
  { swatch: 'bg-[#ffff00]', label: '0.900 - 0.999' },
  { swatch: 'bg-[#00ff00]', label: '0.850 - 0.899' },
  { swatch: 'bg-[#808080]', label: '0.800 - 0.849' },
  { swatch: 'bg-[#ababab]', label: '0.00 - 0.799', inset: true },
]

function ModelView() {
  return (
    <main className="flex min-w-0 flex-1 flex-col">
      <div className="flex h-[19px] border-b border-[#9fb2d0] bg-white pt-px">
        <button type="button" className="ml-[5px] flex w-[91px] items-center justify-between bg-[#2b579a] pr-[2px] pl-[11px] text-white">
          Active Structure
          <CloseIcon color="#fff" />
        </button>
      </div>
      <div className="relative mr-1 mb-[2px] ml-1 min-h-0 flex-1 border-l border-[#777] bg-black">
        <JacketModel />
        <div className="absolute top-2 left-2 font-['Liberation_Sans',sans-serif] text-[#22a4dc]">
          <h3 className="text-[11px] leading-[14px]">Ftg. Result: Damage</h3>
          <ul className="mt-1 ml-2">
            {legend.map(({ swatch, label, inset }) => (
              <li key={label} className="flex h-4 items-center">
                <span className={clsx('h-4 w-4', swatch)} />
                <span className={clsx('pt-[2px] text-[8px] leading-[13px]', inset ? 'pl-[11px]' : 'pl-[9px]')}>{label}</span>
              </li>
            ))}
          </ul>
        </div>
      </div>
    </main>
  )
}

export default function App() {
  return (
    <div className="flex h-screen flex-col overflow-hidden bg-[#f0f0f0] font-['Open_Sans','Noto_Sans',sans-serif] text-[8px]">
      <nav className="flex h-[19px] shrink-0 items-stretch border-b border-[#dcdcdc] bg-white text-[#444]">
        <button type="button" className="w-[39px] bg-[#2b579a] text-white">FILE</button>
        <button type="button" className="-mb-px mr-px ml-[6px] w-[49px] border-x border-t border-[#dcdcdc] bg-white text-[#2b579a]">
          DISPLAY
        </button>
        {tabs.map(({ label, width }) => (
          <button key={label} type="button" className={width}>
            {label}
          </button>
        ))}
        <button
          type="button"
          aria-label="Help"
          className="mr-px ml-auto flex size-3 items-center justify-center self-center rounded-full bg-[#2f66c4] font-bold text-white"
        >
          ?
        </button>
      </nav>
      <Ribbon />
      <Toolbar />
      <div className="flex min-h-0 flex-1">
        <FatigueSummary />
        <ModelView />
        <FatigueInput />
      </div>
      <footer className="flex h-[15px] shrink-0 items-center bg-[#2b579a] px-[2px] text-white">
        <span className="flex-1">Ready</span>
        <span className="w-[172px]">Active Structure</span>
        <span className="w-[66px] overflow-hidden whitespace-nowrap">Version 23.00.00.3</span>
        <span className="w-[161px] pr-[10px] text-right">Current Units: Metric kN</span>
      </footer>
    </div>
  )
}
